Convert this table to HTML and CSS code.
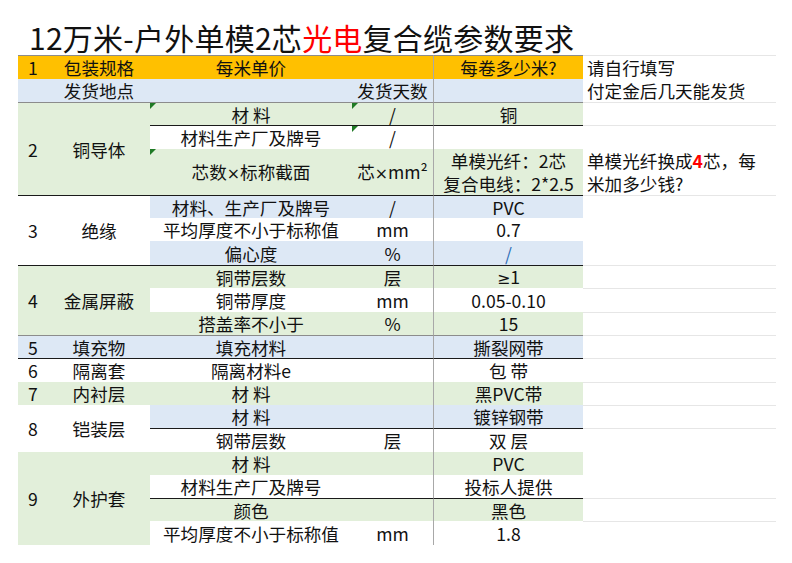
FILE: index.html
```html
<!DOCTYPE html>
<html lang="zh">
<head>
<meta charset="utf-8">
<title>12万米-户外单模2芯光电复合缆参数要求</title>
<link rel="stylesheet" href="styles.css">
</head>
<body>
<div class="sheet">
  <h1 class="title">12万米-户外单模2芯<span class="red">光电</span>复合缆参数要求</h1>
  <div class="grid">
    <!-- header -->
    <div class="c num orange t-mid">1</div>
    <div class="c orange t-mid">包装规格</div>
    <div class="c orange t-mid">每米单价</div>
    <div class="c orange t-mid"></div>
    <div class="c val orange t-mid">每卷多少米?</div>
    <div class="c note t-faint">请自行填写</div>
    <!-- shipping -->
    <div class="c num blue"></div>
    <div class="c blue">发货地点</div>
    <div class="c blue"></div>
    <div class="c blue">发货天数</div>
    <div class="c val blue"></div>
    <div class="c note">付定金后几天能发货</div>
    <!-- 2 -->
    <div class="c num green span3 t-mid">2</div>
    <div class="c green span3 t-mid">铜导体</div>
    <div class="c green t-mid tri">材 料</div>
    <div class="c green t-mid tri">/</div>
    <div class="c val green t-mid">铜</div>
    <div class="c note t-faint"></div>
    <div class="c white t-dark">材料生产厂及牌号</div>
    <div class="c white t-dark tri">/</div>
    <div class="c val white t-dark"></div>
    <div class="c note t-faint"></div>
    <div class="c green tri"><span>芯数<span class="lat">×</span>标称截面</span></div>
    <div class="c green"><span>芯<span class="lat">×</span>mm²</span></div>
    <div class="c val green"><span>单模光纤：2芯<br>复合电线：2*2.5</span></div>
    <div class="c note"><span>单模光纤换成<b class="red">4</b>芯，每<br>米加多少钱?</span></div>
    <!-- 3 -->
    <div class="c num white span3 t-dark">3</div>
    <div class="c white span3 t-dark">绝缘</div>
    <div class="c blue t-dark">材料、生产厂及牌号</div>
    <div class="c blue t-dark">/</div>
    <div class="c val blue t-dark">PVC</div>
    <div class="c note t-faint span3"></div>
    <div class="c white">平均厚度不小于标称值</div>
    <div class="c white">mm</div>
    <div class="c val white">0.7</div>
    <div class="c blue">偏心度</div>
    <div class="c blue">%</div>
    <div class="c val blue link">/</div>
    <!-- 4 -->
    <div class="c num green span3 t-dark">4</div>
    <div class="c green span3 t-dark">金属屏蔽</div>
    <div class="c green t-dark">铜带层数</div>
    <div class="c green t-dark">层</div>
    <div class="c val green t-dark"><span><span class="lat">≥</span>1</span></div>
    <div class="c note t-faint"></div>
    <div class="c white">铜带厚度</div>
    <div class="c white">mm</div>
    <div class="c val white">0.05-0.10</div>
    <div class="c note t-faint"></div>
    <div class="c green">搭盖率不小于</div>
    <div class="c green">%</div>
    <div class="c val green">15</div>
    <div class="c note t-faint"></div>
    <!-- 5 -->
    <div class="c num blue t-mid">5</div>
    <div class="c blue t-mid">填充物</div>
    <div class="c blue t-mid">填充材料</div>
    <div class="c blue t-mid"></div>
    <div class="c val blue t-mid">撕裂网带</div>
    <div class="c note t-faint"></div>
    <!-- 6 -->
    <div class="c num white t-dark">6</div>
    <div class="c white t-dark">隔离套</div>
    <div class="c white t-dark">隔离材料e</div>
    <div class="c white t-dark"></div>
    <div class="c val white t-dark">包 带</div>
    <div class="c note t-faint"></div>
    <!-- 7 -->
    <div class="c num green">7</div>
    <div class="c green">内衬层</div>
    <div class="c green">材 料</div>
    <div class="c green"></div>
    <div class="c val green">黑PVC带</div>
    <div class="c note t-faint"></div>
    <!-- 8 -->
    <div class="c num white span2">8</div>
    <div class="c white span2">铠装层</div>
    <div class="c blue">材 料</div>
    <div class="c blue"></div>
    <div class="c val blue">镀锌钢带</div>
    <div class="c note t-faint"></div>
    <div class="c white t-dark">钢带层数</div>
    <div class="c white t-dark">层</div>
    <div class="c val white t-dark">双 层</div>
    <div class="c note t-faint"></div>
    <!-- 9 -->
    <div class="c num green span4">9</div>
    <div class="c green span4">外护套</div>
    <div class="c green">材 料</div>
    <div class="c green"></div>
    <div class="c val green">PVC</div>
    <div class="c note"></div>
    <div class="c white">材料生产厂及牌号</div>
    <div class="c white"></div>
    <div class="c val white">投标人提供</div>
    <div class="c note"></div>
    <div class="c green t-dark">颜色</div>
    <div class="c green t-dark"></div>
    <div class="c val green t-dark">黑色</div>
    <div class="c note t-faint"></div>
    <div class="c white">平均厚度不小于标称值</div>
    <div class="c white">mm</div>
    <div class="c val white">1.8</div>
    <div class="c note t-faint"></div>
  </div>
</div>
</body>
</html>
```

FILE: styles.css
```css
* { box-sizing: border-box; }

body {
  margin: 0;
  background: #ffffff;
  color: #111111;
  font-family: "Noto Sans CJK SC", "Noto Sans", sans-serif;
}

.sheet {
  padding: 20px 0 0 18px;
}

.title {
  margin: 0 0 0 11px;
  height: 35px;
  font-size: 30px;
  font-weight: 400;
  line-height: 35px;
  letter-spacing: 0.25px;
  white-space: nowrap;
}

.red { color: #ff0000; }

.lat { font-family: "DejaVu Sans", "Liberation Sans", sans-serif; font-size: 0.9em; }

.grid {
  display: grid;
  grid-template-columns: 30px 102px 202px 81px 150px 193px;
  grid-template-rows: 24px 23px 23px 24px 46px 23px 23px 24px 23px 24px 23px 23px 24px 23px 23px 24px 23px 23px 23px 24px;
  font-size: 17.6px;
  line-height: 23px;
}

.c {
  position: relative;
  display: flex;
  align-items: center;
  justify-content: center;
  text-align: center;
  white-space: nowrap;
}

.num {
  justify-content: flex-start;
  padding-left: 10px;
}

.note {
  justify-content: flex-start;
  text-align: left;
  padding-left: 4px;
}

.note b { font-weight: 700; }

.val { border-left: 1px solid #a8a8a8; }

.orange { background: #ffc000; }
.blue { background: #dde8f5; }
.green { background: #e2efda; }
.white { background: #ffffff; }

.link { color: #2e6fb8; }

.span2 { grid-row: span 2; }
.span3 { grid-row: span 3; }
.span4 { grid-row: span 4; }

.t-dark { border-top: 1px solid #1a1a1a; }
.t-mid { border-top: 1px solid #8c8c8c; }
.t-faint { border-top: 1px solid #e6e6e6; }

.tri::before {
  content: "";
  position: absolute;
  left: 0;
  top: 0;
  border-top: 6px solid #1f7a25;
  border-right: 6px solid transparent;
}
```
